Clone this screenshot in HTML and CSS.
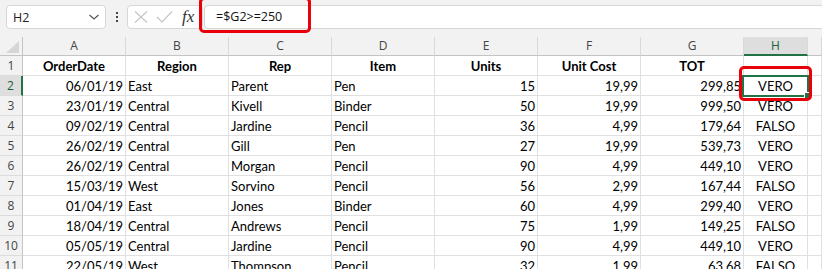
FILE: index.html
```html
<!DOCTYPE html>
<html lang="it">
<head>
  <meta charset="UTF-8">
  <title>Foglio1 - Excel</title>
  <link rel="stylesheet" href="styles.css">
</head>
<body>
  <div class="formula-bar">
    <div class="name-box">
      <span>H2</span>
      <svg width="12" height="8" viewBox="0 0 12 8"><polyline points="1.5,2 6,6 10.5,2" fill="none" stroke="#555" stroke-width="1.2"/></svg>
    </div>
    <div class="more">
      <i></i><i></i><i></i>
    </div>
    <div class="fx-buttons">
      <svg width="14" height="12" viewBox="0 0 14 12"><path d="M1 0.5 L13 11.5 M13 0.5 L1 11.5" stroke="#c4c4c4" stroke-width="1.1" fill="none"/></svg>
      <svg width="17" height="12" viewBox="0 0 17 12"><polyline points="1,6 6,11 16,0.5" stroke="#c4c4c4" stroke-width="1.1" fill="none"/></svg>
      <span class="fx">fx</span>
    </div>
    <div class="formula-input">=$G2&gt;=250</div>
    <div class="mark mark-formula"></div>
  </div>

  <div class="sheet">
    <div class="row head">
      <div class="corner"><svg width="13" height="12" viewBox="0 0 13 12"><polygon points="13,0 13,12 0,12" fill="#d6d6d6"/></svg></div>
      <div>A</div><div>B</div><div>C</div><div>D</div><div>E</div><div>F</div><div>G</div><div class="on">H</div><div></div>
    </div>
    <div class="row">
      <div class="rh">1</div>
      <div class="c b">OrderDate</div><div class="c b">Region</div><div class="c b">Rep</div><div class="c b">Item</div><div class="c b">Units</div><div class="c b">Unit Cost</div><div class="c b">TOT</div><div></div><div></div>
    </div>
    <div class="row">
      <div class="rh on">2</div>
      <div class="r">06/01/19</div><div>East</div><div>Parent</div><div>Pen</div><div class="r">15</div><div class="r">19,99</div><div class="r">299,85</div><div class="c sel">VERO<div class="mark mark-cell"></div></div><div></div>
    </div>
    <div class="row">
      <div class="rh">3</div>
      <div class="r">23/01/19</div><div>Central</div><div>Kivell</div><div>Binder</div><div class="r">50</div><div class="r">19,99</div><div class="r">999,50</div><div class="c">VERO</div><div></div>
    </div>
    <div class="row">
      <div class="rh">4</div>
      <div class="r">09/02/19</div><div>Central</div><div>Jardine</div><div>Pencil</div><div class="r">36</div><div class="r">4,99</div><div class="r">179,64</div><div class="c">FALSO</div><div></div>
    </div>
    <div class="row">
      <div class="rh">5</div>
      <div class="r">26/02/19</div><div>Central</div><div>Gill</div><div>Pen</div><div class="r">27</div><div class="r">19,99</div><div class="r">539,73</div><div class="c">VERO</div><div></div>
    </div>
    <div class="row">
      <div class="rh">6</div>
      <div class="r">26/02/19</div><div>Central</div><div>Morgan</div><div>Pencil</div><div class="r">90</div><div class="r">4,99</div><div class="r">449,10</div><div class="c">VERO</div><div></div>
    </div>
    <div class="row">
      <div class="rh">7</div>
      <div class="r">15/03/19</div><div>West</div><div>Sorvino</div><div>Pencil</div><div class="r">56</div><div class="r">2,99</div><div class="r">167,44</div><div class="c">FALSO</div><div></div>
    </div>
    <div class="row">
      <div class="rh">8</div>
      <div class="r">01/04/19</div><div>East</div><div>Jones</div><div>Binder</div><div class="r">60</div><div class="r">4,99</div><div class="r">299,40</div><div class="c">VERO</div><div></div>
    </div>
    <div class="row">
      <div class="rh">9</div>
      <div class="r">18/04/19</div><div>Central</div><div>Andrews</div><div>Pencil</div><div class="r">75</div><div class="r">1,99</div><div class="r">149,25</div><div class="c">FALSO</div><div></div>
    </div>
    <div class="row">
      <div class="rh">10</div>
      <div class="r">05/05/19</div><div>Central</div><div>Jardine</div><div>Pencil</div><div class="r">90</div><div class="r">4,99</div><div class="r">449,10</div><div class="c">VERO</div><div></div>
    </div>
    <div class="row">
      <div class="rh">11</div>
      <div class="r">22/05/19</div><div>West</div><div>Thompson</div><div>Pencil</div><div class="r">32</div><div class="r">1,99</div><div class="r">63,68</div><div class="c">FALSO</div><div></div>
    </div>
  </div>
</body>
</html>
```

FILE: styles.css
```css
body {
  margin: 0;
  height: 269px;
  overflow: hidden;
  background: #f2f2f2;
  font-family: "Open Sans", "Noto Sans", sans-serif;
}

/* formula bar */
.formula-bar {
  position: relative;
  display: flex;
  align-items: center;
  height: 34px;
  padding-left: 6px;
}
.name-box {
  box-sizing: border-box;
  display: flex;
  align-items: center;
  justify-content: space-between;
  width: 100px;
  height: 24px;
  padding: 0 5px 0 6px;
  background: #fff;
  border: 1px solid #d6d6d6;
  border-radius: 4px;
  font-size: 12.5px;
  color: #222;
}
.more {
  display: flex;
  flex-direction: column;
  gap: 2px;
  margin: 0 9px 0 10px;
}
.more i {
  display: block;
  width: 2px;
  height: 2px;
  background: #444;
}
.fx-buttons {
  box-sizing: border-box;
  display: flex;
  align-items: center;
  gap: 8px;
  width: 76px;
  height: 24px;
  padding-left: 6px;
  background: #fff;
  border: 1px solid #d6d6d6;
  border-radius: 4px;
}
.fx {
  font-family: "Liberation Serif", "DejaVu Serif", serif;
  font-style: italic;
  font-size: 17px;
  color: #333;
  margin-left: 1px;
}
.formula-input {
  box-sizing: border-box;
  flex: 1;
  height: 24px;
  margin-left: 1px;
  margin-right: -10px;
  padding-left: 11px;
  line-height: 22px;
  background: #fff;
  border: 1px solid #d6d6d6;
  border-radius: 4px 0 0 4px;
  font-size: 12.5px;
  color: #111;
}

/* red highlight boxes drawn over the screenshot */
.mark {
  position: absolute;
  box-sizing: border-box;
  border: 3px solid #e8000b;
  border-radius: 5px;
  z-index: 5;
}
.mark-formula {
  left: 199px;
  top: -3px;
  width: 112px;
  height: 36px;
}
.mark-cell {
  left: -5px;
  top: -10px;
  width: 73px;
  height: 35px;
}

/* grid */
.sheet {
  margin-top: 3px;
  font-family: "Lato", "Liberation Sans", sans-serif;
  font-size: 13px;
  color: #000;
}
.row {
  display: grid;
  grid-template-columns: 23px repeat(7, 103px) 64px 1fr;
  background: #fff;
}
.row > div {
  box-sizing: border-box;
  height: 20px;
  padding: 1px 2px 0;
  line-height: 19px;
  white-space: nowrap;
  overflow: hidden;
  border-right: 1px solid #e0e0e0;
  border-bottom: 1px solid #e0e0e0;
}
.row > .sel {
  overflow: visible;
}
.r { text-align: right; }
.c { text-align: center; }
.b { font-weight: bold; }

.head {
  background: #f2f2f2;
}
.head > div {
  height: 19px;
  padding: 0;
  line-height: 18px;
  text-align: center;
  font-family: "Open Sans", "Noto Sans", sans-serif;
  font-size: 12px;
  color: #444;
  border-right-color: #d9d9d9;
  border-bottom-color: #c4c4c4;
}
.head > .on {
  background: #dedede;
  color: #1b5e3b;
  border-bottom: 2px solid #217346;
}
.head > .corner {
  display: flex;
  align-items: flex-end;
  justify-content: flex-end;
  padding: 0 3px 2px 0;
  border-right-color: #c4c4c4;
}
.row > .rh {
  padding: 0;
  line-height: 20px;
  text-align: center;
  background: #f2f2f2;
  font-family: "Open Sans", "Noto Sans", sans-serif;
  font-size: 12px;
  color: #444;
  border-right-color: #c4c4c4;
  border-bottom-color: #dcdcdc;
}
.row > .rh.on {
  background: #dedede;
  color: #1b5e3b;
  border-right: 2px solid #217346;
}

/* active cell */
.sel {
  position: relative;
}
.sel::after {
  content: "";
  position: absolute;
  left: -2px;
  top: -1px;
  right: -2px;
  bottom: -2px;
  border: 2px solid #217346;
}
.sel::before {
  content: "";
  position: absolute;
  right: -4px;
  bottom: -4px;
  width: 5px;
  height: 5px;
  background: #217346;
  border: 1px solid #fff;
  z-index: 2;
}
```
